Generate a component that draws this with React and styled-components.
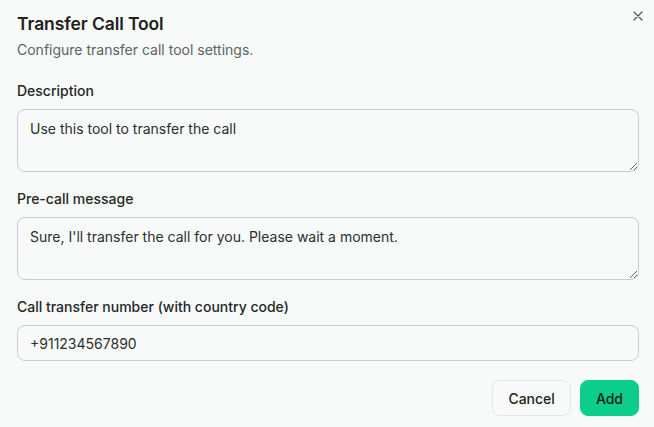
import React from "react";
import styled, { createGlobalStyle } from "styled-components";

const Global = createGlobalStyle`
  html, body { margin: 0; padding: 0; background: #f8faf9; }
  body { font-family: Inter, "Noto Sans", sans-serif; color: #1c1f1e; }
  * { box-sizing: border-box; }
`;

const Dialog = styled.div`
  position: relative;
  width: 654px;
  height: 427px;
  padding: 12px 15px 10px 17px;
  display: flex;
  flex-direction: column;
`;

const Title = styled.h2`
  margin: 0;
  font-size: 17.5px;
  line-height: 24px;
  font-weight: 600;
  color: #1d2120;
  letter-spacing: -0.1px;
`;

const Subtitle = styled.p`
  margin: 4px 0 0;
  font-size: 14px;
  line-height: 20px;
  color: #5b6360;
`;

const Form = styled.div`
  display: flex;
  flex-direction: column;
  gap: 17px;
  margin-top: 21px;
`;

const Field = styled.div`
  display: flex;
  flex-direction: column;
  gap: 8px;
`;

const Label = styled.label`
  font-size: 14px;
  line-height: 20px;
  font-weight: 500;
  color: #232826;
`;

const TextArea = styled.textarea`
  width: 100%;
  height: 63px;
  padding: 9px 12px;
  border: 1px solid #c8cecb;
  border-radius: 8px;
  background: #f8faf9;
  font-family: inherit;
  font-size: 14px;
  line-height: 20px;
  color: #2a2f2d;
  resize: vertical;
  outline: none;
`;

const Input = styled.input`
  width: 100%;
  height: 36px;
  padding: 0 12px;
  border: 1px solid #c8cecb;
  border-radius: 8px;
  background: #f8faf9;
  font-family: inherit;
  font-size: 14px;
  color: #2a2f2d;
  outline: none;
`;

const Footer = styled.div`
  display: flex;
  justify-content: flex-end;
  gap: 9px;
  margin-top: 19px;
`;

const Button = styled.button`
  height: 36px;
  padding: 0 15px;
  border-radius: 8px;
  font-family: inherit;
  font-size: 14px;
  font-weight: 500;
  cursor: pointer;
  border: 1px solid ${(p) => (p.$primary ? "#0ccd8c" : "#e2e6e4")};
  background: ${(p) => (p.$primary ? "#0ccd8c" : "#f8faf9")};
  color: ${(p) => (p.$primary ? "#0b1a14" : "#1d2120")};
`;

const Close = styled.button`
  position: absolute;
  top: 8px;
  right: 8px;
  width: 16px;
  height: 16px;
  padding: 0;
  border: none;
  background: none;
  display: flex;
  align-items: center;
  justify-content: center;
  color: #555b59;
`;

export default function App() {
  return (
    <>
      <Global />
      <Dialog>
        <Close aria-label="Close">
          <svg width="12" height="12" viewBox="0 0 12 12" fill="none" stroke="currentColor" strokeWidth="1.3" strokeLinecap="round">
            <path d="M2 2l8 8M10 2l-8 8" />
          </svg>
        </Close>
        <Title>Transfer Call Tool</Title>
        <Subtitle>Configure transfer call tool settings.</Subtitle>
        <Form>
          <Field>
            <Label>Description</Label>
            <TextArea defaultValue="Use this tool to transfer the call" />
          </Field>
          <Field>
            <Label>Pre-call message</Label>
            <TextArea defaultValue="Sure, I'll transfer the call for you. Please wait a moment." />
          </Field>
          <Field>
            <Label>Call transfer number (with country code)</Label>
            <Input defaultValue="+911234567890" />
          </Field>
        </Form>
        <Footer>
          <Button>Cancel</Button>
          <Button $primary>Add</Button>
        </Footer>
      </Dialog>
    </>
  );
}
